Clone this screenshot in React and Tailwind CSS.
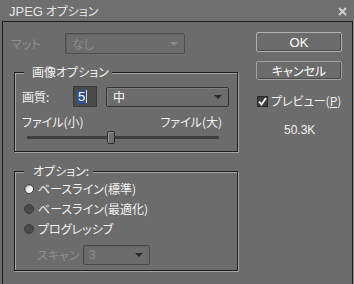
import React from "react";

const F = {
  fontFamily: '"Noto Sans CJK JP", "Liberation Sans", sans-serif',
};

function Arrow({ color = "#2a2a2a" }) {
  return (
    <svg width="8" height="4" viewBox="0 0 8 4" className="shrink-0">
      <path d="M0 0 H8 L4 4 Z" fill={color} />
    </svg>
  );
}

function Radio({ on }) {
  return on ? (
    <span className="w-[10px] h-[10px] rounded-full bg-[#f4f4f4] border border-[#3e3e3e] shadow-[inset_1px_1px_1px_#9a9a9a] shrink-0" />
  ) : (
    <span className="w-[10px] h-[10px] rounded-full bg-[#4a4a4a] border border-[#3a3a3a] shrink-0" />
  );
}

export default function App() {
  return (
    <div
      className="w-[354px] h-[284px] bg-[#6c6c6c] overflow-hidden flex flex-col text-[12px] text-[#f2f2f2] [font-feature-settings:'palt']"
      style={F}
    >
      {/* title bar */}
      <div className="h-[21px] shrink-0 flex items-center justify-between pl-[9px] pr-[7px] bg-[#6f6f6f]">
        <span className="text-[12px] leading-[21px] text-[#e4e4e4]">
          <span className="text-[13px]" style={{ fontFamily: '"Liberation Sans", sans-serif' }}>JPEG</span> オプション
        </span>
        <svg width="9" height="9" viewBox="0 0 9 9" className="mt-[1px]">
          <path d="M1 1 L8 8 M8 1 L1 8" stroke="#cfcfcf" strokeWidth="2" />
        </svg>
      </div>

      {/* body */}
      <div className="flex-1 ml-[2px] mr-[1px] border-t border-l border-r border-[#1c1c1c] shadow-[1px_0_0_#8c8c8c] flex pl-[8px] pt-[10px]">
        {/* left column */}
        <div className="w-[228px] pt-[1px] flex flex-col">
          {/* matte row */}
          <div className="h-[21px] flex items-center">
            <span className="w-[54px] text-[#8e8e8e]">マット</span>
            <div className="w-[120px] h-[21px] border border-[#4e4e4e] rounded-[2px] flex items-center justify-between pl-[6px] pr-[6px] shadow-[inset_1px_1px_0_#626262]">
              <span className="text-[#8c8c8c]">なし</span>
              <Arrow color="#8a8a8a" />
            </div>
          </div>

          {/* group 1 */}
          <div className="mt-[18px] ml-[3px] h-[80px] w-[224px] border border-[#1e1e1e] shadow-[1px_1px_0_#a4a4a4,inset_1px_1px_0_#a4a4a4] flex flex-col">
            <div className="-mt-[8px] ml-[9px] pl-[8px] pr-[3px] h-[14px] leading-[14px] w-fit bg-[#6c6c6c]">
              画像オプション
            </div>
            <div className="mt-[7px] pl-[7px] flex items-start h-[21px]">
              <span className="w-[51px] leading-[21px]">画質:</span>
              <div className="w-[24px] h-[21px] bg-[#4a4a4a] border border-[#3a3a3a] flex items-center pl-[3px]">
                <span className="bg-[#34508a] text-white leading-[14px] px-[1px] text-[13px]" style={{ fontFamily: '"Liberation Sans", sans-serif' }}>5</span>
                <span className="w-[1px] h-[13px] bg-[#dcdcdc]" />
              </div>
              <div className="ml-[9px] mt-[1px] w-[123px] h-[20px] border border-[#333333] rounded-[2px] flex items-center justify-between pl-[6px] pr-[6px] shadow-[inset_1px_1px_0_#808080]">
                <span className="text-white">中</span>
                <Arrow />
              </div>
            </div>
            <div className="mt-[8px] h-[14px] leading-[14px] pl-[7px] pr-[15px] flex justify-between">
              <span>ファイル(小)</span>
              <span>ファイル(大)</span>
            </div>
            <div className="mt-[1px] h-[14px] pl-[12px] flex items-center">
              <div className="w-[80px] h-[3px] bg-[#3e3e3e] rounded-l-[1px]" />
              <div className="w-[8px] h-[13px] rounded-[2px] border border-[#2e2e2e] bg-[#6e6e6e] shadow-[inset_1px_1px_0_#9a9a9a]" />
              <div className="w-[104px] h-[3px] bg-[#3e3e3e] rounded-r-[1px]" />
            </div>
          </div>

          {/* group 2 */}
          <div className="mt-[19px] ml-[3px] h-[100px] w-[224px] border border-[#1e1e1e] shadow-[1px_1px_0_#a4a4a4,inset_1px_1px_0_#a4a4a4] flex flex-col">
            <div className="-mt-[8px] ml-[9px] pl-[9px] pr-[4px] h-[14px] leading-[14px] w-fit bg-[#6c6c6c]">
              オプション:
            </div>
            <div className="mt-[1px] flex flex-col pl-[9px]">
              <div className="h-[20px] flex items-center gap-[4px]">
                <Radio on />
                <span>ベースライン(標準)</span>
              </div>
              <div className="h-[20px] flex items-center gap-[4px]">
                <Radio />
                <span>ベースライン(最適化)</span>
              </div>
              <div className="h-[20px] flex items-center gap-[4px]">
                <Radio />
                <span>プログレッシブ</span>
              </div>
            </div>
            <div className="mt-[6px] h-[20px] pl-[22px] flex items-center">
              <span className="w-[46px] text-[#8c8c8c]">スキャン</span>
              <div className="w-[67px] h-[20px] border border-[#4a4a4a] rounded-[2px] flex items-center justify-between pl-[5px] pr-[6px] shadow-[inset_1px_1px_0_#626262]">
                <span className="text-[#8a8a8a]" style={{ fontFamily: '"Liberation Sans", sans-serif' }}>3</span>
                <Arrow />
              </div>
            </div>
          </div>
        </div>

        {/* right column */}
        <div className="ml-[17px] w-[86px] flex flex-col">
          <button className="h-[20px] w-[86px] border border-[#b0b0b0] rounded-[2px] bg-[#6c6c6c] shadow-[inset_-1px_-1px_0_#4a4a4a] flex items-center justify-center text-[13px] text-white leading-none" style={{ fontFamily: '"Liberation Sans", sans-serif' }}>
            OK
          </button>
          <button className="mt-[9px] h-[19px] w-[86px] border border-[#a0a0a0] rounded-[2px] bg-[#6c6c6c] shadow-[inset_-1px_-1px_0_#4a4a4a] flex items-center justify-center text-white leading-none">
            キャンセル
          </button>
          <div className="mt-[15px] flex items-center h-[12px] pl-[1px]">
            <span className="w-[11px] h-[11px] bg-[#3c3c3c] border border-[#2a2a2a] flex items-center justify-center shrink-0">
              <svg width="9" height="9" viewBox="0 0 9 9">
                <path d="M1 4.5 L3.5 7.5 L8 1" stroke="#ffffff" strokeWidth="1.8" fill="none" />
              </svg>
            </span>
            <span className="ml-[3px] leading-[12px]">
              プレビュー(<span className="underline">P</span>)
            </span>
          </div>
          <div className="mt-[16px] pl-[28px] leading-[14px] text-[12px]" style={{ fontFamily: '"Liberation Sans", sans-serif' }}>
            50.3K
          </div>
        </div>
      </div>
    </div>
  );
}
